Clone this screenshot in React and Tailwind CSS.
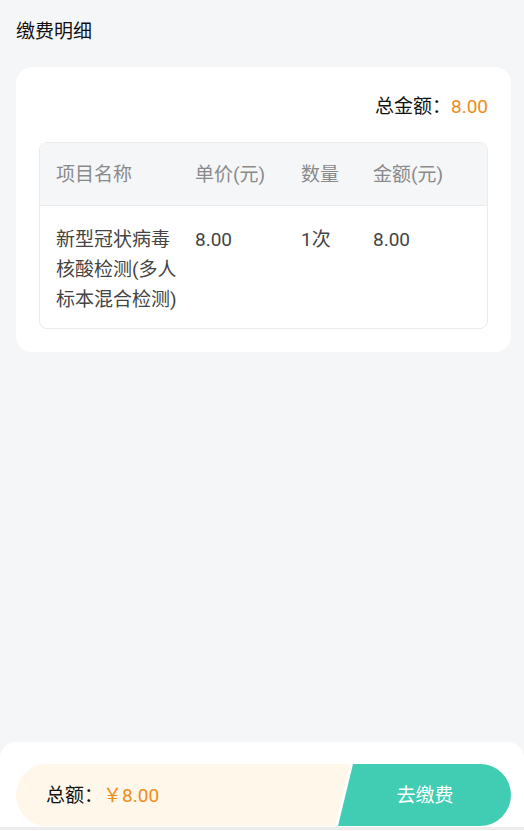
const font = {
  fontFamily: 'Roboto, "Noto Sans CJK SC", sans-serif',
};

const rows = [
  { name: "新型冠状病毒核酸检测(多人标本混合检测)", price: "8.00", qty: "1次", amount: "8.00" },
];

export default function App() {
  return (
    <div
      className="min-h-screen flex flex-col bg-[#f5f6f8]"
      style={font}
    >
      <div className="flex-1">
        <h1 className="px-4 pt-[19px] pb-[22px] text-[19px] leading-[26px] font-normal text-[#111]">
          缴费明细
        </h1>

        <div className="ml-4 mr-[13px] bg-white rounded-[16px] px-[23px] pt-[25px] pb-[23px]">
          <div className="flex justify-end items-center text-[19px] leading-[30px]">
            <span className="text-[#111]">总金额：</span>
            <span className="text-[#f08c1a]">8.00</span>
          </div>

          <div className="mt-[20px] rounded-[8px] border border-[#ebebeb] overflow-hidden">
            <div className="grid grid-cols-[139px_106px_72px_1fr] pl-[16px] pt-[3px] h-[63px] items-center bg-[#f5f6f8] border-b border-[#ebebeb] text-[19px] text-[#8a8a8a]">
              <span>项目名称</span>
              <span>单价(元)</span>
              <span>数量</span>
              <span>金额(元)</span>
            </div>
            {rows.map((r) => (
              <div
                key={r.name}
                className="grid grid-cols-[139px_106px_72px_1fr] pl-[16px] pt-[19px] pb-[13px] text-[19px] leading-[30px] text-[#444]"
              >
                <span className="pr-[14px]">{r.name}</span>
                <span>{r.price}</span>
                <span>{r.qty}</span>
                <span>{r.amount}</span>
              </div>
            ))}
          </div>
        </div>
      </div>

      <div className="bg-white rounded-t-[16px] pt-[22px] pb-[1px]">
        <div className="ml-4 mr-[13px] flex h-[62px] rounded-full overflow-hidden bg-[#fef7ea]">
          <div className="flex-1 flex items-center pl-[30px] pt-[3px] text-[19px]">
            <span className="text-[#111]">总额：</span>
            <span className="text-[#f08c1a]">￥8.00</span>
          </div>
          <button className="relative w-[176px] h-full bg-white [clip-path:polygon(15px_0,100%_0,100%_100%,0_100%)]">
            <span className="absolute inset-0 bg-[#40cdb3] [clip-path:polygon(18px_0,100%_0,100%_100%,3px_100%)]" />
            <span className="relative pl-[4px] pt-[3px] inline-block text-white text-[19px]">去缴费</span>
          </button>
        </div>
        <div className="mt-[1px] h-[3px] bg-[#ececec]" />
      </div>
    </div>
  );
}
